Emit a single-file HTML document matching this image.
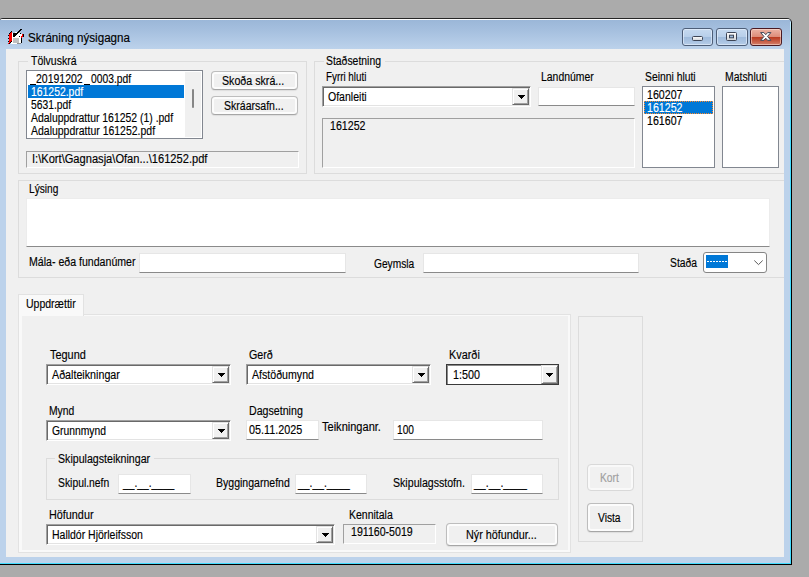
<!DOCTYPE html><html><head><meta charset="utf-8"><title>Skráning nýsigagna</title><style>
html,body{margin:0;padding:0}body{width:809px;height:577px;overflow:hidden;position:relative;background:#ababab;font-family:"Liberation Sans", sans-serif;font-size:12.5px;}body>div,body>svg,body>span{position:absolute;display:block}span{white-space:nowrap;transform-origin:0 0;line-height:1;-webkit-text-stroke:.15px currentColor}
</style></head><body>
<div style="left:-2px;top:18px;width:794px;height:547px;box-sizing:border-box;border-radius:5px 5px 0 0;background:#bcd2eb;border:1px solid #262626;border-right-color:#000;border-bottom-color:#000;"></div>
<div style="left:-1px;top:19px;width:792px;height:30px;border-radius:4px 4px 0 0;background:linear-gradient(#fdfdfd 0,#fdfdfd 1px,#9bb7d8 1px,#a6c0df 40%,#bcd2eb 100%);"></div>
<div style="left:-1px;top:563px;width:792px;height:1px;background:#42dcff;"></div>
<div style="left:790px;top:22px;width:1px;height:542px;background:linear-gradient(#c8f0ff 0,#42dcff 40px,#42dcff 100%);"></div>
<div style="left:6px;top:49px;width:778px;height:508px;background:#f0f0f0;"></div>
<div style="left:682px;top:28px;width:31px;height:18px;box-sizing:border-box;border:1px solid #4d5e78;border-radius:3px;background:linear-gradient(#c6daf0 0,#b8cfea 47%,#9fbbdc 50%,#a8c2e1 75%,#b6cde8 100%);box-shadow:inset 0 0 0 1px rgba(235,244,255,.6);"></div>
<div style="left:716px;top:28px;width:32px;height:18px;box-sizing:border-box;border:1px solid #4d5e78;border-radius:3px;background:linear-gradient(#c6daf0 0,#b8cfea 47%,#9fbbdc 50%,#a8c2e1 75%,#b6cde8 100%);box-shadow:inset 0 0 0 1px rgba(235,244,255,.6);"></div>
<div style="left:750px;top:28px;width:32px;height:18px;box-sizing:border-box;border:1px solid #4a1a22;border-radius:3px;background:linear-gradient(#ecb3a5 0,#de8e7b 47%,#b9391f 50%,#c65a42 75%,#d4806c 100%);box-shadow:inset 0 0 0 1px rgba(255,235,225,.5);"></div>
<svg style="left:692px;top:36px" width="11" height="5"><defs><linearGradient id="gg" x1="0" y1="0" x2="0" y2="1"><stop offset="0" stop-color="#fff"/><stop offset="1" stop-color="#cfd3d8"/></linearGradient></defs><rect x=".5" y=".5" width="10" height="4" rx="1" fill="url(#gg)" stroke="#3d4556"/></svg>
<svg style="left:726px;top:32px" width="11" height="9"><rect x=".5" y=".5" width="10" height="8" rx="1" fill="url(#gg)" stroke="#3d4556"/><rect x="3.5" y="3.2" width="4" height="2.6" fill="#9dbbdd" stroke="#3d4556"/></svg>
<svg style="left:760px;top:32px" width="12" height="9"><path d="M.6 .6H3.9L5.75 2.7 7.6 .6H10.9L7.5 4.45 10.9 8.3H7.6L5.75 6.2 3.9 8.3H.6L4 4.45z" fill="#fff" stroke="#3d4556" stroke-width="1" stroke-linejoin="round"/></svg>
<svg style="left:8px;top:28px" width="16" height="16" shape-rendering="crispEdges"><rect x="12" y="1" width="2" height="1" fill="#000"/><rect x="11" y="2" width="2" height="1" fill="#000"/><rect x="3" y="3" width="1" height="1" fill="#000"/><rect x="10" y="3" width="2" height="1" fill="#000"/><rect x="2" y="4" width="1" height="1" fill="#000"/><rect x="3" y="4" width="1" height="1" fill="#f00"/><rect x="7" y="4" width="2" height="1" fill="#fff"/><rect x="9" y="4" width="2" height="1" fill="#000"/><rect x="1" y="5" width="1" height="1" fill="#000"/><rect x="2" y="5" width="2" height="1" fill="#f00"/><rect x="4" y="5" width="1" height="1" fill="#fff"/><rect x="5" y="5" width="5" height="1" fill="#000"/><rect x="10" y="5" width="2" height="1" fill="#fff"/><rect x="12" y="5" width="1" height="1" fill="#000"/><rect x="1" y="6" width="3" height="1" fill="#f00"/><rect x="4" y="6" width="1" height="1" fill="#fff"/><rect x="5" y="6" width="4" height="1" fill="#000"/><rect x="9" y="6" width="5" height="1" fill="#fff"/><rect x="14" y="6" width="1" height="1" fill="#f00"/><rect x="15" y="6" width="1" height="1" fill="#000"/><rect x="0" y="7" width="1" height="1" fill="#000"/><rect x="1" y="7" width="3" height="1" fill="#f00"/><rect x="4" y="7" width="1" height="1" fill="#fff"/><rect x="5" y="7" width="3" height="1" fill="#000"/><rect x="8" y="7" width="6" height="1" fill="#fff"/><rect x="14" y="7" width="1" height="1" fill="#f00"/><rect x="15" y="7" width="1" height="1" fill="#000"/><rect x="1" y="8" width="3" height="1" fill="#f00"/><rect x="4" y="8" width="1" height="1" fill="#fff"/><rect x="5" y="8" width="2" height="1" fill="#000"/><rect x="7" y="8" width="4" height="1" fill="#fff"/><rect x="11" y="8" width="1" height="1" fill="#000"/><rect x="12" y="8" width="1" height="1" fill="#fff"/><rect x="13" y="8" width="2" height="1" fill="#f00"/><rect x="15" y="8" width="1" height="1" fill="#000"/><rect x="1" y="9" width="3" height="1" fill="#f00"/><rect x="4" y="9" width="9" height="1" fill="#fff"/><rect x="13" y="9" width="1" height="1" fill="#f00"/><rect x="0" y="10" width="1" height="1" fill="#000"/><rect x="1" y="10" width="3" height="1" fill="#f00"/><rect x="4" y="10" width="1" height="1" fill="#fff"/><rect x="5" y="10" width="6" height="1" fill="#c0c0c0"/><rect x="11" y="10" width="2" height="1" fill="#fff"/><rect x="13" y="10" width="1" height="1" fill="#000"/><rect x="1" y="11" width="3" height="1" fill="#f00"/><rect x="4" y="11" width="1" height="1" fill="#fff"/><rect x="5" y="11" width="6" height="1" fill="#c0c0c0"/><rect x="11" y="11" width="2" height="1" fill="#fff"/><rect x="13" y="11" width="1" height="1" fill="#000"/><rect x="1" y="12" width="3" height="1" fill="#f00"/><rect x="4" y="12" width="1" height="1" fill="#fff"/><rect x="5" y="12" width="6" height="1" fill="#c0c0c0"/><rect x="11" y="12" width="2" height="1" fill="#fff"/><rect x="13" y="12" width="1" height="1" fill="#000"/><rect x="0" y="13" width="1" height="1" fill="#000"/><rect x="1" y="13" width="2" height="1" fill="#f00"/><rect x="3" y="13" width="1" height="1" fill="#000"/><rect x="4" y="13" width="1" height="1" fill="#fff"/><rect x="5" y="13" width="6" height="1" fill="#c0c0c0"/><rect x="11" y="13" width="2" height="1" fill="#fff"/><rect x="13" y="13" width="1" height="1" fill="#000"/><rect x="1" y="14" width="1" height="1" fill="#f00"/><rect x="2" y="14" width="1" height="1" fill="#000"/><rect x="3" y="14" width="2" height="1" fill="#fff"/><rect x="5" y="14" width="6" height="1" fill="#c0c0c0"/><rect x="11" y="14" width="2" height="1" fill="#fff"/><rect x="13" y="14" width="1" height="1" fill="#000"/><rect x="0" y="15" width="1" height="1" fill="#f00"/><rect x="1" y="15" width="1" height="1" fill="#000"/><rect x="3" y="15" width="6" height="1" fill="#fff"/><rect x="9" y="15" width="4" height="1" fill="#909090"/></svg>
<div style="left:18px;top:61px;width:289px;height:113px;border:1px solid #dcdcdc;box-sizing:border-box;"></div>
<div style="left:28px;top:55px;width:52px;height:12px;background:#f0f0f0;"></div>
<div style="left:26px;top:70px;width:177px;height:69px;box-sizing:border-box;background:#fff;border:1px solid #828790;"></div>
<div style="left:28px;top:85px;width:156px;height:13px;background:#0078d7;"></div>
<div style="left:30px;top:84px;width:6px;height:1px;background:#000;"></div>
<div style="left:84px;top:84px;width:6px;height:1px;background:#000;"></div>
<div style="left:185px;top:72px;width:16px;height:65px;background:#f0f0f0;"></div>
<div style="left:192px;top:89px;width:2px;height:19px;background:#868686;border-radius:1px;"></div>
<div style="left:211px;top:71px;width:87px;height:19px;box-sizing:border-box;border:1px solid #bdbdbd;border-bottom-color:#a6a6a6;border-radius:4px;background:#f0f0f0;box-shadow:inset 0 0 0 2px #fcfcfc, 0 1px 1px rgba(0,0,0,.08);"></div>
<div style="left:211px;top:96px;width:87px;height:19px;box-sizing:border-box;border:1px solid #bdbdbd;border-bottom-color:#a6a6a6;border-radius:4px;background:#f0f0f0;box-shadow:inset 0 0 0 2px #fcfcfc, 0 1px 1px rgba(0,0,0,.08);"></div>
<div style="left:26px;top:151px;width:273px;height:17px;box-sizing:border-box;background:#f0f0f0;border:1px solid;border-color:#a0a0a0 #fff #fff #a0a0a0;"></div>
<div style="left:314px;top:61px;width:470px;height:113px;border:1px solid #dcdcdc;border-right:none;box-sizing:border-box;"></div>
<div style="left:324px;top:55px;width:61px;height:12px;background:#f0f0f0;"></div>
<div style="left:322px;top:86px;width:209px;height:21px;box-sizing:border-box;background:#fff;border:1px solid;border-color:#a0a0a0 #fff #fff #a0a0a0;box-shadow:inset 1px 1px 0 #696969, inset -1px -1px 0 #e3e3e3;"></div>
<div style="left:512px;top:88px;width:17px;height:17px;box-sizing:border-box;background:#f0f0f0;border:1px solid;border-color:#e3e3e3 #696969 #696969 #e3e3e3;box-shadow:inset 1px 1px 0 #fff, inset -1px -1px 0 #a0a0a0;"><svg width="7" height="4" style="position:absolute;left:5px;top:6px" shape-rendering="crispEdges"><path d="M0 0h7v1h-7zM1 1h5v1h-5zM2 2h3v1h-3zM3 3h1v1h-1z" fill="#000"/></svg></div>
<div style="left:322px;top:118px;width:313px;height:50px;box-sizing:border-box;background:#f0f0f0;border:1px solid;border-color:#a0a0a0 #fff #fff #a0a0a0;"></div>
<div style="left:538px;top:87px;width:97px;height:19px;box-sizing:border-box;background:#fff;border:1px solid #e6e6e6;border-bottom-color:#8a8a8a;"></div>
<div style="left:642px;top:86px;width:73px;height:82px;box-sizing:border-box;background:#fff;border:1px solid #828790;"></div>
<div style="left:644px;top:101px;width:69px;height:13px;background:#0078d7;outline:1px dotted #ff8a2a;outline-offset:-1px;"></div>
<div style="left:722px;top:86px;width:57px;height:82px;box-sizing:border-box;background:#fff;border:1px solid #828790;"></div>
<div style="left:18px;top:180px;width:766px;height:98px;border:1px solid #dcdcdc;border-right:none;box-sizing:border-box;"></div>
<div style="left:26px;top:198px;width:744px;height:49px;box-sizing:border-box;background:#fff;border:1px solid #ececec;border-bottom-color:#8a8a8a;"></div>
<div style="left:139px;top:253px;width:207px;height:20px;box-sizing:border-box;background:#fff;border:1px solid #e6e6e6;border-bottom-color:#8a8a8a;"></div>
<div style="left:423px;top:253px;width:216px;height:20px;box-sizing:border-box;background:#fff;border:1px solid #e6e6e6;border-bottom-color:#8a8a8a;"></div>
<div style="left:703px;top:252px;width:64px;height:21px;box-sizing:border-box;background:#fff;border:1px solid #858585;border-radius:3px;"></div>
<div style="left:706px;top:255px;width:22px;height:13px;background:#0078d7;"></div>
<div style="left:707px;top:261px;width:20px;height:1px;background:repeating-linear-gradient(90deg,#fff 0,#fff 2px,#0078d7 2px,#0078d7 3px);"></div>
<svg style="left:753px;top:259px" width="11" height="7"><path d="M1.3 1.5l4.2 4.1L9.7 1.5" fill="none" stroke="#5a5a5a" stroke-width="1"/></svg>
<div style="left:18px;top:314px;width:553px;height:239px;box-sizing:border-box;background:#f9f9f9;border:1px solid #e2e2e2;"></div>
<div style="left:22px;top:316px;width:546px;height:234px;background:#f0f0f0;"></div>
<div style="left:18px;top:294px;width:66px;height:22px;box-sizing:border-box;background:#f9f9f9;border:1px solid #e2e2e2;border-bottom:none;"></div>
<div style="left:578px;top:316px;width:65px;height:226px;box-sizing:border-box;border:1px solid #dcdcdc;"></div>
<div style="left:46px;top:364px;width:185px;height:21px;box-sizing:border-box;background:#fff;border:1px solid;border-color:#a0a0a0 #fff #fff #a0a0a0;box-shadow:inset 1px 1px 0 #696969, inset -1px -1px 0 #e3e3e3;"></div>
<div style="left:212px;top:366px;width:17px;height:17px;box-sizing:border-box;background:#f0f0f0;border:1px solid;border-color:#e3e3e3 #696969 #696969 #e3e3e3;box-shadow:inset 1px 1px 0 #fff, inset -1px -1px 0 #a0a0a0;"><svg width="7" height="4" style="position:absolute;left:5px;top:6px" shape-rendering="crispEdges"><path d="M0 0h7v1h-7zM1 1h5v1h-5zM2 2h3v1h-3zM3 3h1v1h-1z" fill="#000"/></svg></div>
<div style="left:246px;top:364px;width:185px;height:21px;box-sizing:border-box;background:#fff;border:1px solid;border-color:#a0a0a0 #fff #fff #a0a0a0;box-shadow:inset 1px 1px 0 #696969, inset -1px -1px 0 #e3e3e3;"></div>
<div style="left:412px;top:366px;width:17px;height:17px;box-sizing:border-box;background:#f0f0f0;border:1px solid;border-color:#e3e3e3 #696969 #696969 #e3e3e3;box-shadow:inset 1px 1px 0 #fff, inset -1px -1px 0 #a0a0a0;"><svg width="7" height="4" style="position:absolute;left:5px;top:6px" shape-rendering="crispEdges"><path d="M0 0h7v1h-7zM1 1h5v1h-5zM2 2h3v1h-3zM3 3h1v1h-1z" fill="#000"/></svg></div>
<div style="left:446px;top:364px;width:113px;height:21px;box-sizing:border-box;background:#fff;border:1px solid #3a3a3a;box-shadow:inset 1px 1px 0 #8a8a8a;"></div>
<div style="left:541px;top:365px;width:17px;height:19px;box-sizing:border-box;background:#f0f0f0;border:1px solid;border-color:#e3e3e3 #696969 #696969 #e3e3e3;box-shadow:inset 1px 1px 0 #fff, inset -1px -1px 0 #a0a0a0;"><svg width="7" height="4" style="position:absolute;left:4px;top:7px" shape-rendering="crispEdges"><path d="M0 0h7v1h-7zM1 1h5v1h-5zM2 2h3v1h-3zM3 3h1v1h-1z" fill="#000"/></svg></div>
<div style="left:46px;top:420px;width:185px;height:21px;box-sizing:border-box;background:#fff;border:1px solid;border-color:#a0a0a0 #fff #fff #a0a0a0;box-shadow:inset 1px 1px 0 #696969, inset -1px -1px 0 #e3e3e3;"></div>
<div style="left:212px;top:422px;width:17px;height:17px;box-sizing:border-box;background:#f0f0f0;border:1px solid;border-color:#e3e3e3 #696969 #696969 #e3e3e3;box-shadow:inset 1px 1px 0 #fff, inset -1px -1px 0 #a0a0a0;"><svg width="7" height="4" style="position:absolute;left:5px;top:6px" shape-rendering="crispEdges"><path d="M0 0h7v1h-7zM1 1h5v1h-5zM2 2h3v1h-3zM3 3h1v1h-1z" fill="#000"/></svg></div>
<div style="left:246px;top:420px;width:73px;height:20px;box-sizing:border-box;background:#fff;border:1px solid #e6e6e6;border-bottom-color:#8a8a8a;"></div>
<div style="left:393px;top:420px;width:150px;height:20px;box-sizing:border-box;background:#fff;border:1px solid #e6e6e6;border-bottom-color:#8a8a8a;"></div>
<div style="left:46px;top:458px;width:513px;height:42px;border:1px solid #dcdcdc;box-sizing:border-box;"></div>
<div style="left:55px;top:452px;width:99px;height:12px;background:#f0f0f0;"></div>
<div style="left:118px;top:474px;width:73px;height:20px;box-sizing:border-box;background:#fff;border:1px solid #e6e6e6;border-bottom-color:#8a8a8a;"></div>
<div style="left:295px;top:474px;width:72px;height:20px;box-sizing:border-box;background:#fff;border:1px solid #e6e6e6;border-bottom-color:#8a8a8a;"></div>
<div style="left:471px;top:474px;width:72px;height:20px;box-sizing:border-box;background:#fff;border:1px solid #e6e6e6;border-bottom-color:#8a8a8a;"></div>
<div style="left:46px;top:524px;width:289px;height:21px;box-sizing:border-box;background:#fff;border:1px solid;border-color:#a0a0a0 #fff #fff #a0a0a0;box-shadow:inset 1px 1px 0 #696969, inset -1px -1px 0 #e3e3e3;"></div>
<div style="left:316px;top:526px;width:17px;height:17px;box-sizing:border-box;background:#f0f0f0;border:1px solid;border-color:#e3e3e3 #696969 #696969 #e3e3e3;box-shadow:inset 1px 1px 0 #fff, inset -1px -1px 0 #a0a0a0;"><svg width="7" height="4" style="position:absolute;left:5px;top:6px" shape-rendering="crispEdges"><path d="M0 0h7v1h-7zM1 1h5v1h-5zM2 2h3v1h-3zM3 3h1v1h-1z" fill="#000"/></svg></div>
<div style="left:343px;top:524px;width:93px;height:20px;box-sizing:border-box;background:#f0f0f0;border:1px solid;border-color:#a0a0a0 #fff #fff #a0a0a0;"></div>
<div style="left:446px;top:523px;width:112px;height:23px;box-sizing:border-box;border:1px solid #bdbdbd;border-bottom-color:#a6a6a6;border-radius:4px;background:#f0f0f0;box-shadow:inset 0 0 0 2px #fcfcfc, 0 1px 1px rgba(0,0,0,.08);"></div>
<div style="left:587px;top:464px;width:47px;height:27px;box-sizing:border-box;border:1px solid #d9d9d9;border-radius:4px;background:#f1f1f1;box-shadow:inset 0 0 0 2px #f9f9f9;"></div>
<div style="left:587px;top:503px;width:47px;height:29px;box-sizing:border-box;border:1px solid #bdbdbd;border-bottom-color:#a6a6a6;border-radius:4px;background:#f0f0f0;box-shadow:inset 0 0 0 2px #fcfcfc, 0 1px 1px rgba(0,0,0,.08);"></div>
<span style="left:28.10px;top:31.75px;transform:scaleX(0.9286);">Skráning nýsigagna</span>
<span style="left:30.50px;top:54.75px;transform:scaleX(0.8390);">Tölvuskrá</span>
<span style="left:36.40px;top:72.75px;transform:scaleX(0.8390);">20191202</span>
<span style="left:90.50px;top:72.75px;transform:scaleX(0.8234);">0003.pdf</span>
<span style="left:30.50px;top:85.75px;transform:scaleX(0.8322);color:#fff;">161252.pdf</span>
<span style="left:30.50px;top:98.75px;transform:scaleX(0.8234);">5631.pdf</span>
<span style="left:30.50px;top:111.75px;transform:scaleX(0.8344);">Adaluppdrattur 161252 (1) .pdf</span>
<span style="left:30.50px;top:124.75px;transform:scaleX(0.8380);">Adaluppdrattur 161252.pdf</span>
<span style="left:222.30px;top:74.75px;transform:scaleX(0.8527);">Skoða skrá...</span>
<span style="left:224.20px;top:99.75px;transform:scaleX(0.8425);">Skráarsafn...</span>
<span style="left:31.61px;top:152.75px;transform:scaleX(0.8889);">I:\Kort\Gagnasja\Ofan...\161252.pdf</span>
<span style="left:326.00px;top:54.75px;transform:scaleX(0.8325);">Staðsetning</span>
<span style="left:326.46px;top:70.75px;transform:scaleX(0.7861);">Fyrri hluti</span>
<span style="left:328.00px;top:90.75px;transform:scaleX(0.8430);">Ofanleiti</span>
<span style="left:329.50px;top:119.75px;transform:scaleX(0.8501);">161252</span>
<span style="left:540.92px;top:70.75px;transform:scaleX(0.8337);">Landnúmer</span>
<span style="left:645.00px;top:70.75px;transform:scaleX(0.8282);">Seinni hluti</span>
<span style="left:724.92px;top:70.75px;transform:scaleX(0.8343);">Matshluti</span>
<span style="left:646.50px;top:88.75px;transform:scaleX(0.8501);">160207</span>
<span style="left:646.50px;top:101.75px;transform:scaleX(0.8501);color:#fff;">161252</span>
<span style="left:646.50px;top:114.75px;transform:scaleX(0.8501);">161607</span>
<span style="left:28.69px;top:182.75px;transform:scaleX(0.8101);">Lýsing</span>
<span style="left:28.65px;top:255.75px;transform:scaleX(0.8467);">Mála- eða fundanúmer</span>
<span style="left:374.25px;top:257.75px;transform:scaleX(0.8154);">Geymsla</span>
<span style="left:670.00px;top:256.75px;transform:scaleX(0.8253);">Staða</span>
<span style="left:26.25px;top:297.75px;transform:scaleX(0.8407);">Uppdrættir</span>
<span style="left:49.50px;top:348.75px;transform:scaleX(0.8744);">Tegund</span>
<span style="left:248.75px;top:348.75px;transform:scaleX(0.8532);">Gerð</span>
<span style="left:448.63px;top:348.75px;transform:scaleX(0.8691);">Kvarði</span>
<span style="left:51.75px;top:368.75px;transform:scaleX(0.8570);">Aðalteikningar</span>
<span style="left:251.75px;top:368.75px;transform:scaleX(0.8493);">Afstöðumynd</span>
<span style="left:452.50px;top:368.75px;transform:scaleX(0.8618);">1:500</span>
<span style="left:48.67px;top:404.75px;transform:scaleX(0.8273);">Mynd</span>
<span style="left:52.25px;top:424.75px;transform:scaleX(0.8262);">Grunnmynd</span>
<span style="left:249.15px;top:404.75px;transform:scaleX(0.8509);">Dagsetning</span>
<span style="left:249.25px;top:423.75px;transform:scaleX(0.8633);">05.11.2025</span>
<span style="left:321.75px;top:420.75px;transform:scaleX(0.8832);">Teikninganr.</span>
<span style="left:396.75px;top:423.75px;transform:scaleX(0.8132);">100</span>
<span style="left:58.00px;top:452.75px;transform:scaleX(0.8500);">Skipulagsteikningar</span>
<span style="left:57.50px;top:476.75px;transform:scaleX(0.8280);">Skipul.nefn</span>
<span style="left:216.16px;top:476.75px;transform:scaleX(0.8428);">Byggingarnefnd</span>
<span style="left:393.00px;top:476.75px;transform:scaleX(0.8482);">Skipulagsstofn.</span>
<span style="left:122.82px;top:476.75px;transform:scaleX(0.8203);">__.__.____</span>
<span style="left:298.33px;top:476.75px;transform:scaleX(0.8281);">__.__.____</span>
<span style="left:473.84px;top:476.75px;transform:scaleX(0.8435);">__.__.____</span>
<span style="left:48.63px;top:508.75px;transform:scaleX(0.8655);">Höfundur</span>
<span style="left:51.66px;top:528.75px;transform:scaleX(0.8378);">Halldór Hjörleifsson</span>
<span style="left:348.66px;top:508.75px;transform:scaleX(0.8403);">Kennitala</span>
<span style="left:350.75px;top:525.75px;transform:scaleX(0.8482);">191160-5019</span>
<span style="left:466.14px;top:528.75px;transform:scaleX(0.8632);">Nýr höfundur...</span>
<span style="left:600.18px;top:471.75px;transform:scaleX(0.8240);color:#a0a0a0;">Kort</span>
<span style="left:598.00px;top:511.75px;transform:scaleX(0.8185);">Vista</span>
</body></html>
